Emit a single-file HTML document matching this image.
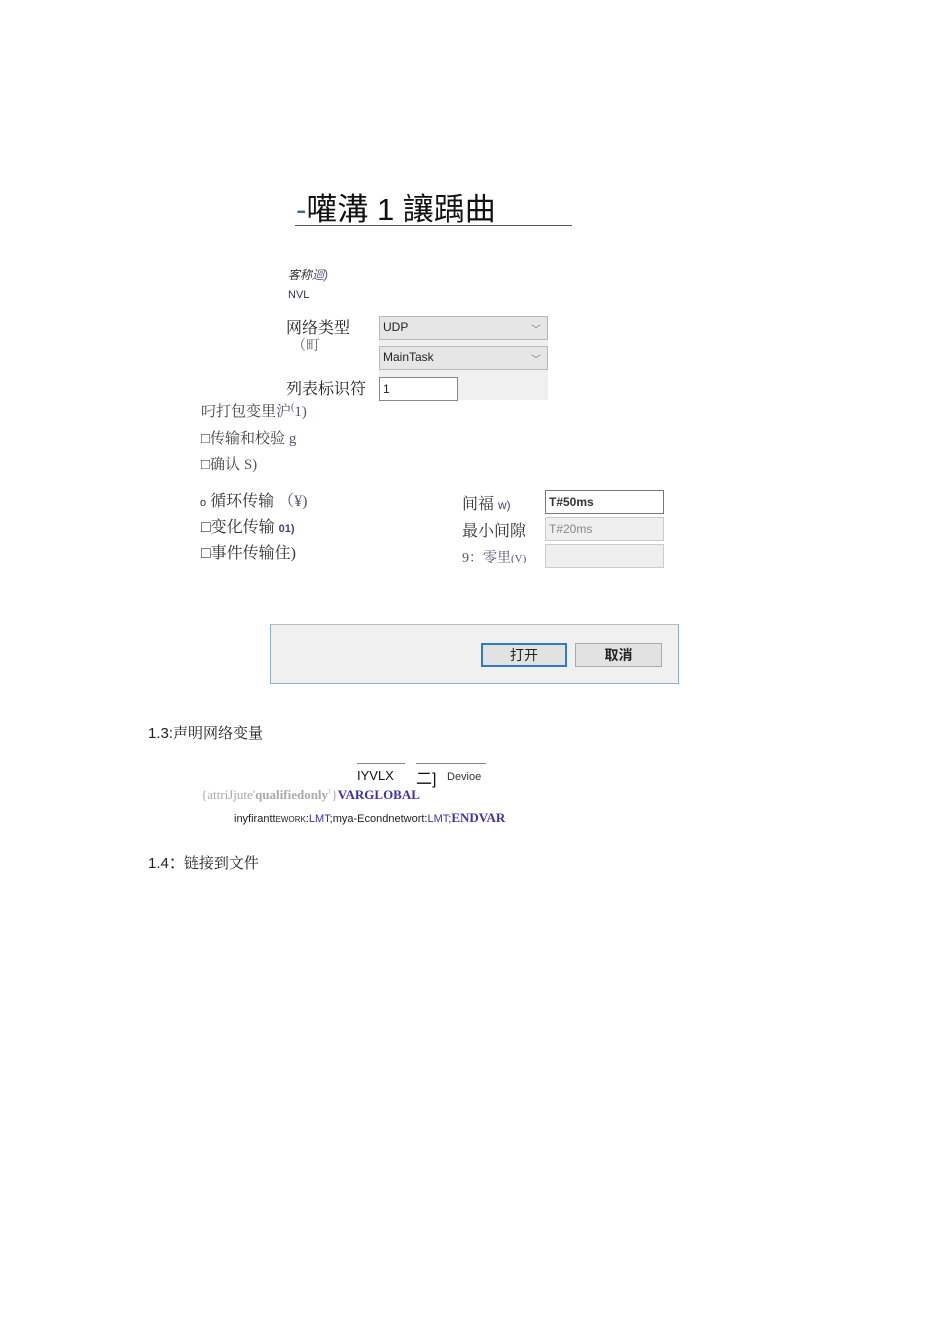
<!DOCTYPE html>
<html><head><meta charset="utf-8"><style>
body{margin:0;width:950px;height:1318px;background:#fff;position:relative;font-family:"Liberation Sans","Noto Sans CJK SC",sans-serif;color:#222;overflow:hidden}
.a{position:absolute;white-space:nowrap}
.s{font-family:"Liberation Serif","Noto Serif CJK SC",serif}
.box{position:absolute;box-sizing:border-box}
.sel{background:#e6e6e6;border:1px solid #b8b8b8;font-size:12px;padding:3px 3px;color:#222}
.chev{position:absolute;right:6px;top:4px;color:#777;font-size:10px}
</style></head><body>
<div class="a" style="left:296px;top:184px;font-size:31px;color:#111"><span style="color:#3a6b7a">-</span>嚾溝 1 讓踽曲</div>
<div class="box" style="left:295px;top:225px;width:277px;height:1px;background:#555"></div>

<div class="a" style="left:288px;top:266px;font-size:12px;font-style:italic;color:#333">客称<span style="color:#557">迴)</span></div>
<div class="a" style="left:288px;top:289px;font-size:11px;color:#334">NVL</div>
<div class="a s" style="left:286px;top:315px;font-size:16px">网络类型</div>
<div class="a s" style="left:292px;top:335px;font-size:14px;color:#666">（町</div>
<div class="box" style="left:379px;top:316px;width:169px;height:84px;background:#f0f0f0"></div>
<div class="box sel" style="left:379px;top:316px;width:169px;height:24px">UDP<span class="chev">﹀</span></div>
<div class="box sel" style="left:379px;top:346px;width:169px;height:24px">MainTask<span class="chev">﹀</span></div>
<div class="a s" style="left:286px;top:376px;font-size:16px">列表标识符</div>
<div class="box" style="left:379px;top:377px;width:79px;height:24px;background:#fff;border:1px solid #888;font-size:12px;padding:4px 3px">1</div>

<div class="a s" style="left:201px;top:400px;font-size:15px;color:#444">叼打包变里<span style="color:#557">沪<sup style="font-size:10px">(</sup>1)</span></div>
<div class="a s" style="left:201px;top:427px;font-size:15px;color:#444">□传输和校验 <span style="color:#557">g</span></div>
<div class="a s" style="left:201px;top:453px;font-size:15px;color:#444">□确认 <span style="color:#557">S)</span></div>

<div class="a s" style="left:200px;top:488px;font-size:16px;color:#333"><span style="font-size:11px;font-family:Liberation Sans">o</span> 循环传输 <span style="color:#557">（¥)</span></div>
<div class="a s" style="left:201px;top:514px;font-size:16px;color:#333">□变化传输 <span style="font-size:11px;font-family:Liberation Sans;color:#447;font-weight:bold">01)</span></div>
<div class="a s" style="left:201px;top:540px;font-size:16px;color:#333">□事件传输住)</div>

<div class="a s" style="left:462px;top:491px;font-size:16px;color:#333">间福 <span style="font-family:Liberation Sans;font-size:12px;color:#447">w)</span></div>
<div class="a s" style="left:462px;top:518px;font-size:16px;color:#333">最小间隙</div>
<div class="a s" style="left:462px;top:547px;font-size:14px;color:#557;height:16px;overflow:hidden">9：零里<span style="font-size:11px">(V)</span></div>
<div class="box" style="left:545px;top:490px;width:119px;height:24px;border:1px solid #777;font-size:12px;font-weight:bold;padding:4px 3px;color:#333">T#50ms</div>
<div class="box" style="left:545px;top:517px;width:119px;height:24px;border:1px solid #ccc;background:#efefef;font-size:12px;padding:4px 3px;color:#888">T#20ms</div>
<div class="box" style="left:545px;top:544px;width:119px;height:24px;border:1px solid #ccc;background:#efefef"></div>

<div class="box" style="left:270px;top:624px;width:409px;height:60px;background:#f0f0f0;border:1px solid #8cb0d3;border-top-color:#bbb"></div>
<div class="box" style="left:481px;top:643px;width:86px;height:24px;background:#e2e2e2;border:2px solid #2f7bc8;font-size:14px;text-align:center;line-height:20px">打开</div>
<div class="box" style="left:575px;top:643px;width:87px;height:24px;background:#e2e2e2;border:1px solid #aaa;font-size:14px;text-align:center;line-height:22px;font-weight:bold">取消</div>

<div class="a" style="left:148px;top:722px;font-size:15px;color:#222">1.3:<span class="s">声明网络变量</span></div>
<div class="box" style="left:357px;top:763px;width:48px;height:1px;background:#888"></div>
<div class="a" style="left:357px;top:768px;font-size:13px;color:#111">IYVLX</div>
<div class="box" style="left:416px;top:763px;width:70px;height:1px;background:#888"></div>
<div class="a" style="left:416px;top:765px;font-size:16px;color:#111">二]</div>
<div class="a" style="left:447px;top:771px;font-size:11px;color:#333">Devioe</div>
<div class="a s" style="left:201px;top:787px;font-size:13px;color:#aaa">{attriJjute'<b>qualifiedonly</b><sup style="font-size:7px">1</sup>}<b style="color:#3b33aa">VARGLOBAL</b></div>
<div class="a" style="left:234px;top:810px;font-size:11px;color:#222">inyfirantt<span style="font-size:8px">EWORK</span>:<span style="color:#3b33aa">LMT</span>;mya-Econdnetwort:<span style="color:#3b33aa">LMT;</span><b class="s" style="color:#3b33aa;font-size:13px">ENDVAR</b></div>
<div class="a" style="left:148px;top:852px;font-size:15px;color:#222">1.4：<span class="s">链接到文件</span></div>
</body></html>
